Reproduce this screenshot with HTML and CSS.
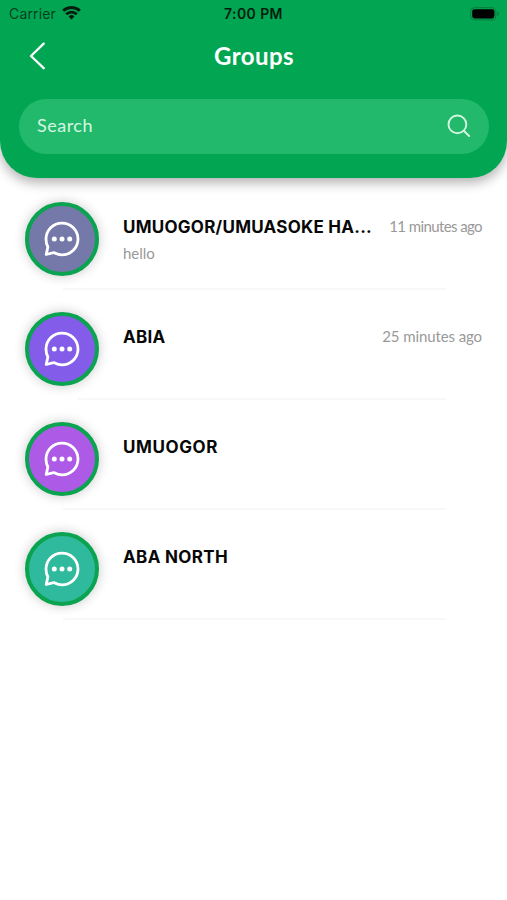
FILE: index.html
```html
<!DOCTYPE html>
<html lang="en">
<head>
<meta charset="utf-8">
<title>Groups</title>
<link rel="stylesheet" href="styles.css">
</head>
<body>
<svg width="0" height="0" class="defs" aria-hidden="true">
  <symbol id="chat" viewBox="0 0 36 36">
    <path d="M2.200 33.500L3.900 26C2.600 23.500 2 20.800 2 18A16 15.800 0 1 1 18 33.800C15.300 33.800 13 33.100 10.800 31.900Q9.800 31.500 8.500 31.900Z" fill="none" stroke="#fff" stroke-width="2.800" stroke-linejoin="round"/>
    <g fill="#fff"><circle cx="10.300" cy="18" r="2.500"/><circle cx="18" cy="18" r="2.500"/><circle cx="25.700" cy="18" r="2.500"/></g>
  </symbol>
</svg>
<header class="header">
  <div class="status">
    <div class="carrier"><span>Carrier</span>
      <svg width="19" height="14" viewBox="0 0 19 14"><g fill="none" stroke="#031c0e" stroke-width="2.900"><path d="M1.200 4.800A12 12 0 0 1 17.800 4.800"/><path d="M4.200 8.300A7.600 7.600 0 0 1 14.800 8.300"/></g><path d="M6.600 10.500A4.100 4.100 0 0 1 12.400 10.500L9.500 13.600Z" fill="#031c0e"/></svg>
    </div>
    <div class="clock">7:00 PM</div>
    <svg class="battery" width="30" height="14" viewBox="0 0 30 14"><rect x=".7" y=".7" width="25.200" height="12.200" rx="3.600" fill="none" stroke="#087c40"/><rect x="2.200" y="2.200" width="22.200" height="9.200" rx="2.300" fill="#000"/><path d="M27.300 4.600Q29 5.200 29 6.800T27.300 9Z" fill="#087c40"/></svg>
  </div>
  <div class="nav">
    <svg class="back" width="18" height="28" viewBox="0 0 18 28"><path d="M14.700 1.600L2 14L14.700 26.200" fill="none" stroke="#fff" stroke-width="2.300" stroke-linecap="round" stroke-linejoin="round"/></svg>
    <h1>Groups</h1>
  </div>
  <div class="search">
    <span>Search</span>
    <svg width="24" height="24" viewBox="0 0 24 24"><g fill="none" stroke="#d5f7e2" stroke-width="1.900" stroke-linecap="round"><circle cx="10.400" cy="10.400" r="8.900"/><path d="M17 17L22.200 22"/></g></svg>
  </div>
</header>
<main class="list">
  <article class="row">
    <div class="avatar slate"><svg width="36" height="36"><use href="#chat"/></svg></div>
    <div class="body"><h2>UMUOGOR/UMUASOKE HA...</h2><p>hello</p></div>
    <time class="tight">11 minutes ago</time>
  </article>
  <article class="row inset">
    <div class="avatar violet"><svg width="36" height="36"><use href="#chat"/></svg></div>
    <div class="body"><h2>ABIA</h2></div>
    <time>25 minutes ago</time>
  </article>
  <article class="row">
    <div class="avatar purple"><svg width="36" height="36"><use href="#chat"/></svg></div>
    <div class="body"><h2>UMUOGOR</h2></div>
  </article>
  <article class="row">
    <div class="avatar teal"><svg width="36" height="36"><use href="#chat"/></svg></div>
    <div class="body"><h2>ABA NORTH</h2></div>
  </article>
</main>
</body>
</html>
```
FILE: styles.css
```css
* { box-sizing: border-box; }
body { margin: 0; min-height: 900px; background: #fff; font-family: Lato, sans-serif; overflow: hidden; }
h1, h2, p { margin: 0; }
svg { display: block; flex: none; }
.defs { position: absolute; }
.header { height: 178px; padding: 0 18px 0 19px; background: #02a652; border-radius: 0 0 37px 37px; box-shadow: 0 5px 12px rgba(0, 0, 0, .3); }
.status { height: 28px; margin: 0 -10px; display: grid; grid-template-columns: 1fr auto 1fr; align-items: center; color: #031c0e; font-family: Inter, sans-serif; font-size: 14px; line-height: 28px; }
.carrier { display: flex; align-items: center; gap: 6px; color: #064020; letter-spacing: .15px; }
.carrier svg { margin-top: -3px; }
.clock { font-weight: 600; letter-spacing: .4px; margin-left: -1px; }
.battery { justify-self: end; margin: -1px -1px 0 0; }
.nav { height: 70px; display: grid; grid-template-columns: 1fr auto 1fr; align-items: center; padding-bottom: 14px; }
.back { margin-left: 10px; }
h1 { color: #fff; font-size: 24px; font-weight: 700; line-height: 28px; letter-spacing: .4px; }
.search { height: 55px; margin-top: .5px; border-radius: 28px; background: #23b96c; padding: 0 18px; display: flex; align-items: center; justify-content: space-between; color: #d5f7e2; font-size: 18px; line-height: 24px; letter-spacing: .5px; }
.search span { margin-top: -3px; }
.search svg { margin-top: -1px; }
.list { padding-top: 1px; }
.row { position: relative; height: 110px; padding: 23px 25px 0; display: flex; align-items: flex-start; }
.row::after { content: ""; position: absolute; left: 63px; right: 61px; bottom: -1px; height: 2px; background: #f8f8f8; }
.inset::after { left: 78px; }
.avatar { width: 74px; height: 74px; flex: none; border: 4.500px solid #0aa34f; border-radius: 50%; display: flex; align-items: center; justify-content: center; box-shadow: 0 0 12px rgba(0, 0, 0, .22); }
.slate { background: #7479aa; }
.violet { background: #835de9; }
.purple { background: #ad5ae7; }
.teal { background: #2fb99d; }
.body { flex: 1; min-width: 0; margin-left: 24px; padding-top: 14px; }
h2 { color: #080808; font-family: Inter, sans-serif; font-size: 17px; font-weight: 700; line-height: 22px; letter-spacing: .25px; white-space: nowrap; }
.row:nth-child(3) h2 { letter-spacing: .6px; }
.row:nth-child(4) h2 { letter-spacing: .35px; }
p { margin-top: 5px; color: #999; font-size: 15px; line-height: 20px; }
time { color: #999; font-size: 15px; line-height: 20px; padding-top: 14px; letter-spacing: -.1px; white-space: nowrap; }
.tight { letter-spacing: -.6px; }
```
